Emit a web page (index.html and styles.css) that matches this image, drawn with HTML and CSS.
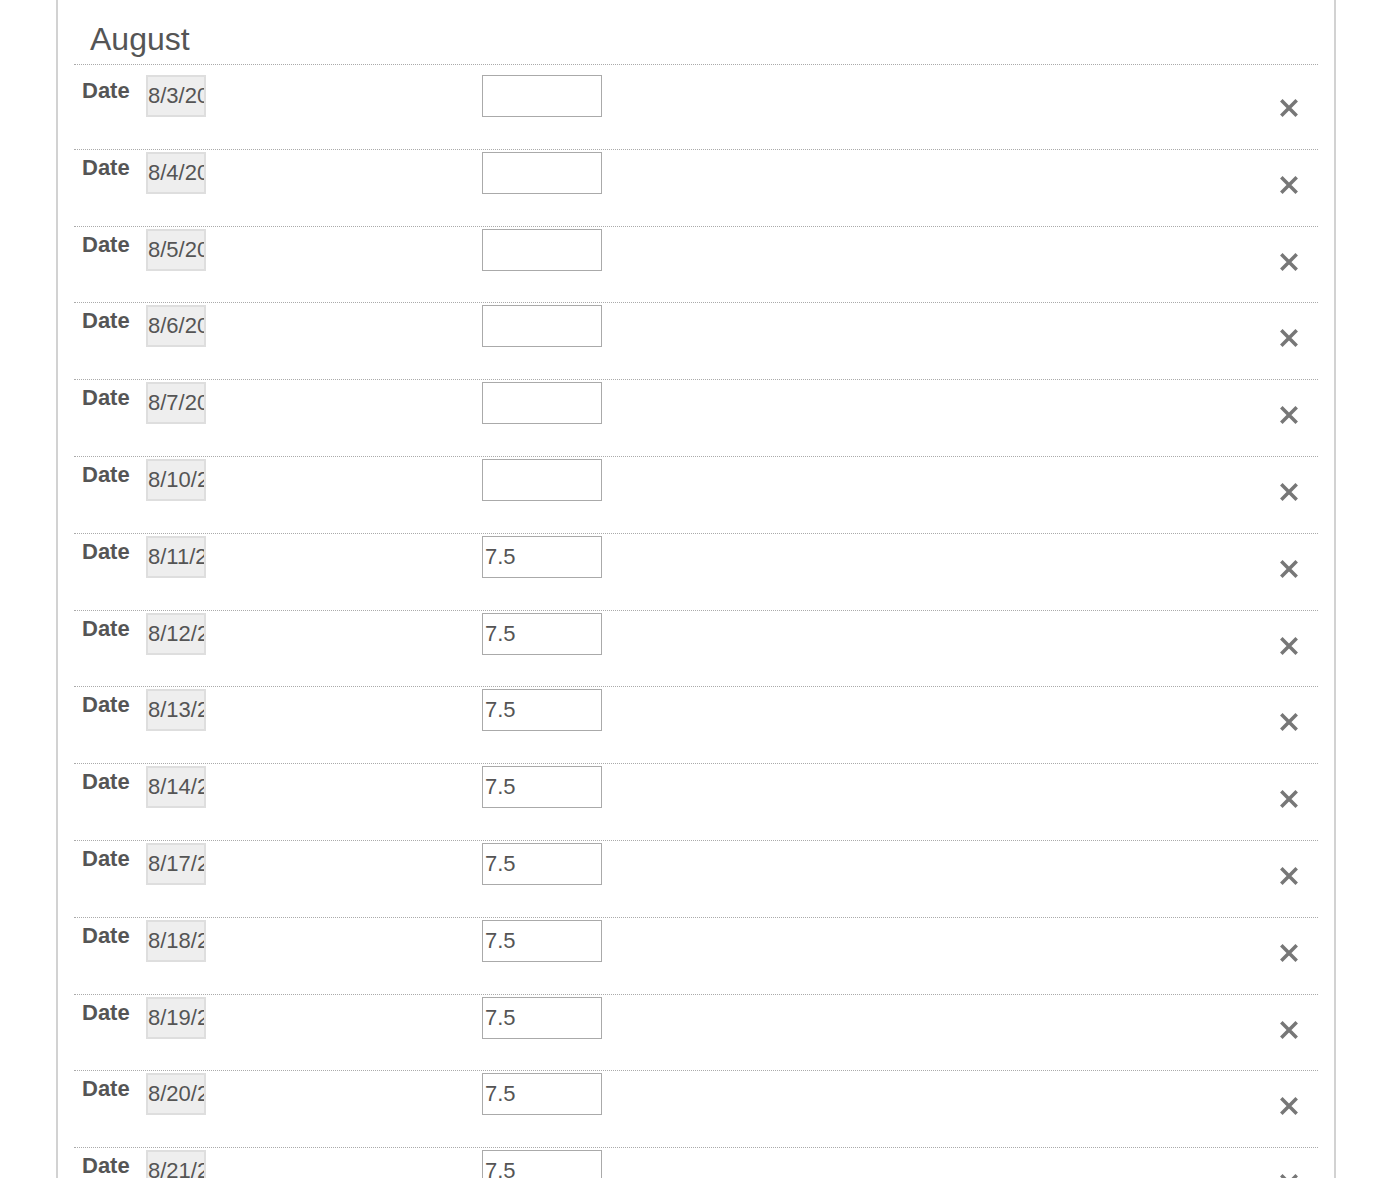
FILE: index.html
```html
<!DOCTYPE html>
<html lang="en">
<head>
<meta charset="utf-8">
<title>August</title>
<link rel="stylesheet" href="styles.css">
</head>
<body>
<div class="page">
  <section class="panel">
    <h2 class="month">August</h2>
    <div class="entries">
      <div class="entry"><span class="label">Date</span><input class="date" type="text" value="8/3/2020" readonly><input class="hours" type="text" value=""><button class="remove" type="button" aria-label="Remove"><svg viewBox="0 0 20 20"><path d="M3 3L17 17M17 3L3 17"/></svg></button></div>
      <div class="entry"><span class="label">Date</span><input class="date" type="text" value="8/4/2020" readonly><input class="hours" type="text" value=""><button class="remove" type="button" aria-label="Remove"><svg viewBox="0 0 20 20"><path d="M3 3L17 17M17 3L3 17"/></svg></button></div>
      <div class="entry"><span class="label">Date</span><input class="date" type="text" value="8/5/2020" readonly><input class="hours" type="text" value=""><button class="remove" type="button" aria-label="Remove"><svg viewBox="0 0 20 20"><path d="M3 3L17 17M17 3L3 17"/></svg></button></div>
      <div class="entry"><span class="label">Date</span><input class="date" type="text" value="8/6/2020" readonly><input class="hours" type="text" value=""><button class="remove" type="button" aria-label="Remove"><svg viewBox="0 0 20 20"><path d="M3 3L17 17M17 3L3 17"/></svg></button></div>
      <div class="entry"><span class="label">Date</span><input class="date" type="text" value="8/7/2020" readonly><input class="hours" type="text" value=""><button class="remove" type="button" aria-label="Remove"><svg viewBox="0 0 20 20"><path d="M3 3L17 17M17 3L3 17"/></svg></button></div>
      <div class="entry"><span class="label">Date</span><input class="date" type="text" value="8/10/2020" readonly><input class="hours" type="text" value=""><button class="remove" type="button" aria-label="Remove"><svg viewBox="0 0 20 20"><path d="M3 3L17 17M17 3L3 17"/></svg></button></div>
      <div class="entry"><span class="label">Date</span><input class="date" type="text" value="8/11/2020" readonly><input class="hours" type="text" value="7.5"><button class="remove" type="button" aria-label="Remove"><svg viewBox="0 0 20 20"><path d="M3 3L17 17M17 3L3 17"/></svg></button></div>
      <div class="entry"><span class="label">Date</span><input class="date" type="text" value="8/12/2020" readonly><input class="hours" type="text" value="7.5"><button class="remove" type="button" aria-label="Remove"><svg viewBox="0 0 20 20"><path d="M3 3L17 17M17 3L3 17"/></svg></button></div>
      <div class="entry"><span class="label">Date</span><input class="date" type="text" value="8/13/2020" readonly><input class="hours" type="text" value="7.5"><button class="remove" type="button" aria-label="Remove"><svg viewBox="0 0 20 20"><path d="M3 3L17 17M17 3L3 17"/></svg></button></div>
      <div class="entry"><span class="label">Date</span><input class="date" type="text" value="8/14/2020" readonly><input class="hours" type="text" value="7.5"><button class="remove" type="button" aria-label="Remove"><svg viewBox="0 0 20 20"><path d="M3 3L17 17M17 3L3 17"/></svg></button></div>
      <div class="entry"><span class="label">Date</span><input class="date" type="text" value="8/17/2020" readonly><input class="hours" type="text" value="7.5"><button class="remove" type="button" aria-label="Remove"><svg viewBox="0 0 20 20"><path d="M3 3L17 17M17 3L3 17"/></svg></button></div>
      <div class="entry"><span class="label">Date</span><input class="date" type="text" value="8/18/2020" readonly><input class="hours" type="text" value="7.5"><button class="remove" type="button" aria-label="Remove"><svg viewBox="0 0 20 20"><path d="M3 3L17 17M17 3L3 17"/></svg></button></div>
      <div class="entry"><span class="label">Date</span><input class="date" type="text" value="8/19/2020" readonly><input class="hours" type="text" value="7.5"><button class="remove" type="button" aria-label="Remove"><svg viewBox="0 0 20 20"><path d="M3 3L17 17M17 3L3 17"/></svg></button></div>
      <div class="entry"><span class="label">Date</span><input class="date" type="text" value="8/20/2020" readonly><input class="hours" type="text" value="7.5"><button class="remove" type="button" aria-label="Remove"><svg viewBox="0 0 20 20"><path d="M3 3L17 17M17 3L3 17"/></svg></button></div>
      <div class="entry"><span class="label">Date</span><input class="date" type="text" value="8/21/2020" readonly><input class="hours" type="text" value="7.5"><button class="remove" type="button" aria-label="Remove"><svg viewBox="0 0 20 20"><path d="M3 3L17 17M17 3L3 17"/></svg></button></div>
      <div class="entry"><span class="label">Date</span><input class="date" type="text" value="8/24/2020" readonly><input class="hours" type="text" value="7.5"><button class="remove" type="button" aria-label="Remove"><svg viewBox="0 0 20 20"><path d="M3 3L17 17M17 3L3 17"/></svg></button></div>
    </div>
  </section>
</div>
</body>
</html>
```
FILE: styles.css
```css
html, body {
  margin: 0;
  padding: 0;
  background: #fff;
}

body {
  font-family: "Liberation Sans", Arial, sans-serif;
  color: #555;
}

.page {
  height: 1178px;
  overflow: hidden;
  padding-left: 56px;
}

.panel {
  width: 1280px;
  box-sizing: border-box;
  border-left: 2px solid #d2d2d2;
  border-right: 2px solid #d2d2d2;
  padding: 21px 16px 0;
  min-height: 1400px;
}

.month {
  margin: 0;
  padding: 0 16px 6px;
  font-size: 32px;
  font-weight: normal;
  line-height: 37px;
  color: #555;
  border-bottom: 1px dotted #aaa;
}

.entries {
  padding-top: 8px;
}

.entry {
  display: flex;
  align-items: flex-start;
  height: 76.8px;
  box-sizing: border-box;
  padding-top: 2px;
  border-bottom: 1px dotted #aaa;
}

.label {
  width: 72px;
  box-sizing: border-box;
  padding-left: 8px;
  font-size: 22px;
  font-weight: bold;
  line-height: 31px;
  color: #555;
}

.date {
  width: 60px;
  height: 42px;
  box-sizing: border-box;
  margin: 0;
  padding: 0;
  border: 2px solid #dedede;
  background: #eee;
  font-family: inherit;
  font-size: 22px;
  color: #555;
  outline: none;
}

.hours {
  width: 120px;
  height: 42px;
  box-sizing: border-box;
  margin: 0 0 0 276px;
  padding: 0 2px;
  border: 1px solid #aaa;
  background: #fff;
  font-family: inherit;
  font-size: 22px;
  color: #555;
  outline: none;
}

.remove {
  margin: 22px 18px 0 auto;
  padding: 0;
  width: 22px;
  height: 22px;
  border: none;
  background: none;
  cursor: pointer;
}

.remove svg {
  display: block;
  width: 22px;
  height: 22px;
  fill: none;
  stroke: #777;
  stroke-width: 3.2;
}
```
